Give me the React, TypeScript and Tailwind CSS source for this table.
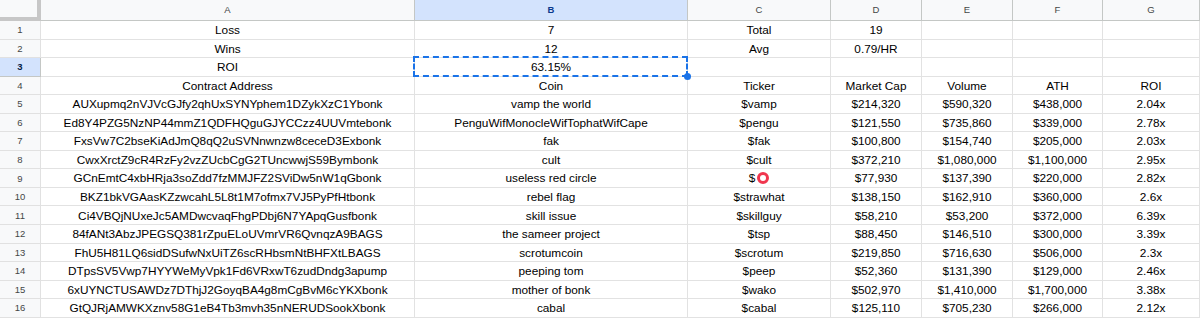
import React from 'react';

const cols = ['A', 'B', 'C', 'D', 'E', 'F', 'G'];

// cell contents, row 1..16
const rows: string[][] = [
  ['Loss', '7', 'Total', '19', '', '', ''],
  ['Wins', '12', 'Avg', '0.79/HR', '', '', ''],
  ['ROI', '63.15%', '', '', '', '', ''],
  ['Contract Address', 'Coin', 'Ticker', 'Market Cap', 'Volume', 'ATH', 'ROI'],
  ['AUXupmq2nVJVcGJfy2qhUxSYNYphem1DZykXzC1Ybonk', 'vamp the world', '$vamp', '$214,320', '$590,320', '$438,000', '2.04x'],
  ['Ed8Y4PZG5NzNP44mmZ1QDFHQguGJYCCzz4UUVmtebonk', 'PenguWifMonocleWifTophatWifCape', '$pengu', '$121,550', '$735,860', '$339,000', '2.78x'],
  ['FxsVw7C2bseKiAdJmQ8qQ2uSVNnwnzw8ceceD3Exbonk', 'fak', '$fak', '$100,800', '$154,740', '$205,000', '2.03x'],
  ['CwxXrctZ9cR4RzFy2vzZUcbCgG2TUncwwjS59Bymbonk', 'cult', '$cult', '$372,210', '$1,080,000', '$1,100,000', '2.95x'],
  ['GCnEmtC4xbHRja3soZdd7fzMMJFZ2SViDw5nW1qGbonk', 'useless red circle', '$O', '$77,930', '$137,390', '$220,000', '2.82x'],
  ['BKZ1bkVGAasKZzwcahL5L8t1M7ofmx7VJ5PyPfHtbonk', 'rebel flag', '$strawhat', '$138,150', '$162,910', '$360,000', '2.6x'],
  ['Ci4VBQjNUxeJc5AMDwcvaqFhgPDbj6N7YApqGusfbonk', 'skill issue', '$skillguy', '$58,210', '$53,200', '$372,000', '6.39x'],
  ['84fANt3AbzJPEGSQ381rZpuELoUVmrVR6QvnqzA9BAGS', 'the sameer project', '$tsp', '$88,450', '$146,510', '$300,000', '3.39x'],
  ['FhU5H81LQ6sidDSufwNxUiTZ6scRHbsmNtBHFXtLBAGS', 'scrotumcoin', '$scrotum', '$219,850', '$716,630', '$506,000', '2.3x'],
  ['DTpsSV5Vwp7HYYWeMyVpk1Fd6VRxwT6zudDndg3apump', 'peeping tom', '$peep', '$52,360', '$131,390', '$129,000', '2.46x'],
  ['6xUYNCTUSAWDz7DThjJ2GoyqBA4g8mCgBvM6cYKXbonk', 'mother of bonk', '$wako', '$502,970', '$1,410,000', '$1,700,000', '3.38x'],
  ['GtQJRjAMWKXznv58G1eB4Tb3mvh35nNERUDSookXbonk', 'cabal', '$cabal', '$125,110', '$705,230', '$266,000', '2.12x'],
];

function CellText({ value }: { value: string }) {
  if (value === '$O') {
    // the red circle emoji ticker
    return (
      <span className="inline-flex items-center gap-[2px] h-[14px]">
        $<span className="inline-block w-[12px] h-[12px] rounded-full border-[3px] border-[#f0364e]" />
      </span>
    );
  }
  return <>{value}</>;
}

export default function App() {
  return (
    <div
      className="w-[1200px] h-[318px] overflow-hidden bg-white"
      style={{ fontFamily: '"Liberation Sans", Arial, sans-serif' }}
    >
      <div className="grid grid-cols-[41px_374px_273px_143px_91px_91px_90px_97px] grid-rows-[21px_repeat(16,18.55px)]">
        {/* header row */}
        <div className="bg-[#f8f9fa] border-r-[4px] border-b-[4px] border-[#c7c7c7]" />
        {cols.map((c) => (
          <div
            key={c}
            className={
              c === 'B'
                ? 'flex items-center justify-center pt-[1px] bg-[#d3e3fd] border-r border-b border-[#c4c7c5] text-[9.5px] font-bold text-[#0b3a8c]'
                : 'flex items-center justify-center pt-[1px] bg-[#f8f9fa] border-r border-b border-[#c4c7c5] text-[9.5px] text-[#444746]'
            }
          >
            {c}
          </div>
        ))}

        {rows.map((row, i) => {
          const n = i + 1;
          return (
            <React.Fragment key={n}>
              <div
                className={
                  n === 3
                    ? 'flex items-center justify-center pt-[1px] bg-[#d3e3fd] border-r border-b border-[#c4c7c5] text-[9.5px] font-bold text-[#041e49]'
                    : 'flex items-center justify-center pt-[1px] bg-[#f8f9fa] border-r border-b border-[#e1e1e1] text-[9.5px] text-[#444746]'
                }
              >
                {n}
              </div>
              {row.map((v, j) => (
                <div
                  key={j}
                  className={
                    n === 3 && j === 1
                      ? 'relative z-10 flex items-end justify-center pb-[1.5px] border-r border-b border-[#e2e2e2] text-[11.8px] leading-[14px] text-black whitespace-nowrap'
                      : 'relative flex items-end justify-center pb-[1.5px] border-r border-b border-[#e2e2e2] text-[11.8px] leading-[14px] text-black whitespace-nowrap'
                  }
                >
                  <CellText value={v} />
                  {n === 3 && j === 1 && (
                    <>
                      <div className="absolute left-[-2px] top-[-2px] right-[-1px] bottom-[-1px] border-2 border-dashed border-[#1a73e8]" />
                      <div className="absolute right-[-4px] bottom-[-4px] w-[7px] h-[7px] rounded-full bg-[#1a73e8]" />
                    </>
                  )}
                </div>
              ))}
            </React.Fragment>
          );
        })}
      </div>
    </div>
  );
}
